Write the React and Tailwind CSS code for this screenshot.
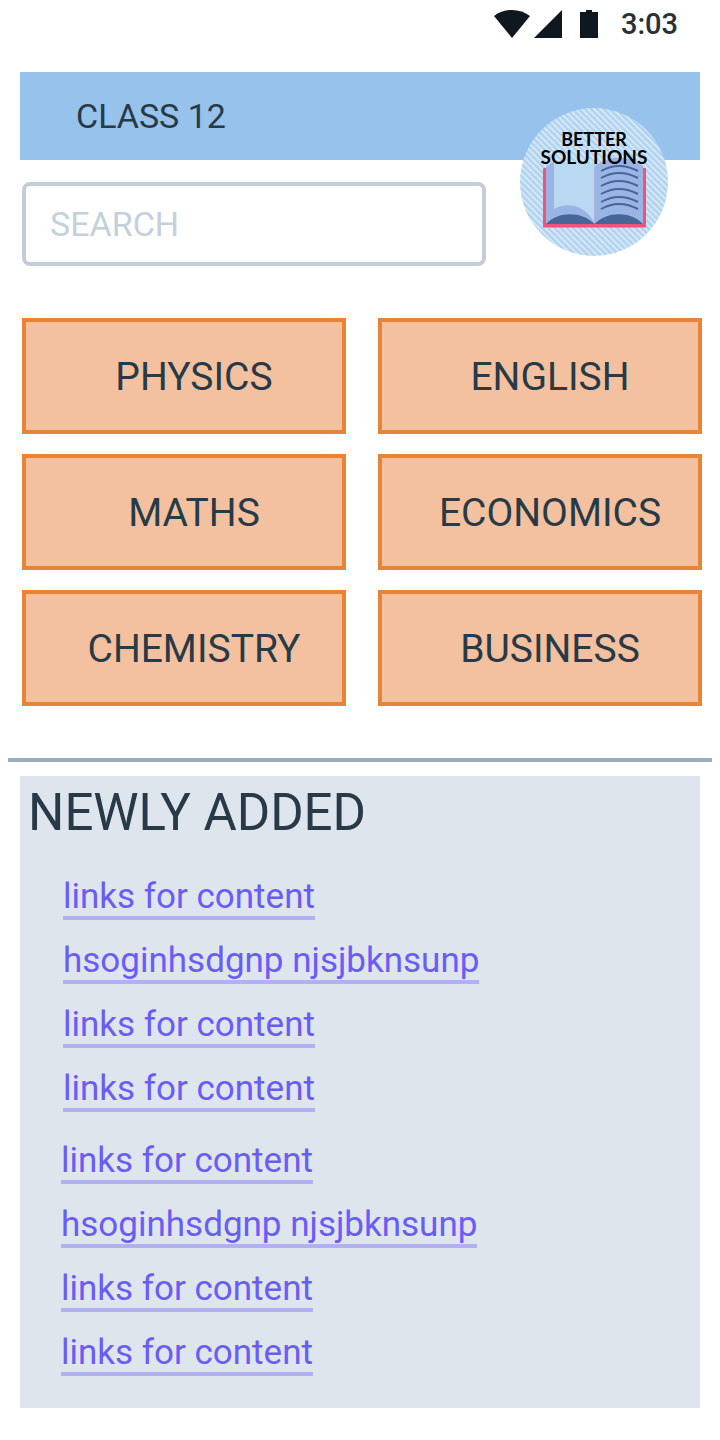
const subjects = ["PHYSICS", "ENGLISH", "MATHS", "ECONOMICS", "CHEMISTRY", "BUSINESS"];

const firstLinks = ["links for content", "hsoginhsdgnp njsjbknsunp", "links for content", "links for content"];
const secondLinks = ["links for content", "hsoginhsdgnp njsjbknsunp", "links for content", "links for content"];

const lineEnds = [63, 70, 78, 86, 94, 101];

function StatusBar() {
  return (
    <div className="flex h-12 items-center justify-end pr-[42px] text-[#10181f]">
      <svg className="h-7 w-[104px]" viewBox="0 0 104 28" fill="currentColor" aria-hidden="true">
        <path d="M0 6C10-2 26-2 36 6L18 28Z" />
        <path d="M40 28L68 0V28Z" />
        <path d="M86 2h6V0h6v2h6v26H86Z" />
      </svg>
      <span className="ml-[23px] text-[29px] leading-8 font-medium text-[#263138]">3:03</span>
    </div>
  );
}

function Logo() {
  return (
    <svg className="absolute top-9 right-8 size-[148px]" viewBox="0 0 148 148" role="img" aria-label="Better Solutions">
      <defs>
        <pattern id="stripes" width="4.4" height="4.4" patternUnits="userSpaceOnUse" patternTransform="rotate(-45)">
          <rect width="4.4" height="4.4" fill="#d0e8fb" />
          <rect width="2.3" height="4.4" fill="#b3d1eb" />
        </pattern>
      </defs>
      <circle cx="74" cy="74" r="74" fill="url(#stripes)" />
      <path d="M23 61Q23 60 24 60H125Q126 60 126 61V119.500H23Z" fill="#ef5379" />
      <path d="M26 59L34 53V116H26Z" fill="#9ab4e4" />
      <path d="M34 55H74.500V116H26V104H34Z" fill="#9ab4e4" />
      <path d="M34 55H74.500V115C66 98 48 93 34 101Z" fill="#b9d8f1" />
      <path d="M74.500 58Q98 41 123 58V116H74.500Z" fill="#9ab4e4" />
      <path d="M26 116C38 103 62 103 74.500 116C87 103 111 103 123 116Z" fill="#476596" />
      {lineEnds.map((y) => (
        <path key={y} d={`M81 ${y}Q99 ${y - 10} 118 ${y}`} fill="none" stroke="#47659b" strokeWidth="2" />
      ))}
      <g fill="#000" fontFamily="Lato, sans-serif" fontWeight="700" textAnchor="middle">
        <text x="74" y="38" fontSize="18">BETTER</text>
        <text x="74" y="56" fontSize="19">SOLUTIONS</text>
      </g>
    </svg>
  );
}

function LinkList({ items, className }) {
  return (
    <ul className={`flex flex-col items-start gap-[22px] ${className}`}>
      {items.map((text, i) => (
        <li key={i} className="flex">
          <a href="#" className="border-b-4 border-[#b2b0f0] text-[35px] leading-[38px] text-[#6a5cf6]">
            {text}
          </a>
        </li>
      ))}
    </ul>
  );
}

export default function App() {
  return (
    <main className="min-h-screen bg-white pb-8 font-['Roboto',sans-serif] text-[#283a47]">
      <StatusBar />
      <header className="relative mx-5 mt-6">
        <div className="flex h-[88px] items-center bg-[#96c2eb] pl-14">
          <h1 className="text-[34px] leading-10">CLASS 12</h1>
        </div>
        <input
          type="search"
          aria-label="Search"
          placeholder="SEARCH"
          className="mt-[22px] ml-0.5 block h-[84px] w-[calc(100%-216px)] rounded-lg border-4 border-[#c4cdd6] px-6 text-[34px] outline-none placeholder:text-[#c4d0db]"
        />
        <Logo />
      </header>
      <nav className="mt-[52px] grid grid-cols-2 gap-x-8 gap-y-5 pr-[18px] pl-[22px]">
        {subjects.map((name) => (
          <button
            key={name}
            type="button"
            className="h-[116px] border-4 border-[#e78438] bg-[#f3c19f] pt-0.5 pl-5 text-[39px] leading-[48px]"
          >
            {name}
          </button>
        ))}
      </nav>
      <hr className="mx-2 mt-[52px] border-t-4 border-[#9eadba]" />
      <section className="mx-5 mt-[14px] bg-[#dfe5ed] pt-1 pb-8">
        <h2 className="pl-2 text-[51px] leading-[66px]">NEWLY ADDED</h2>
        <LinkList items={firstLinks} className="mt-8 pl-[43px]" />
        <LinkList items={secondLinks} className="mt-[30px] pl-[41px]" />
      </section>
    </main>
  );
}
